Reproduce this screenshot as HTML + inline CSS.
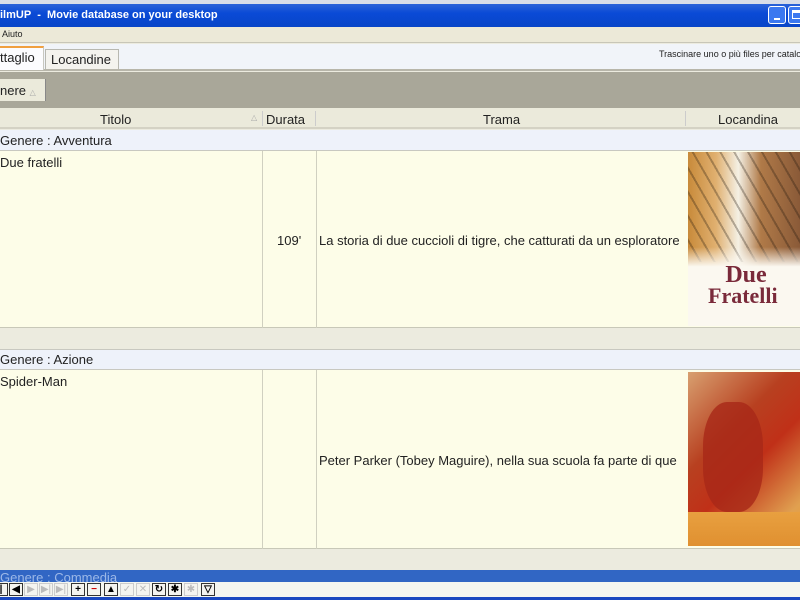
<!DOCTYPE html>
<html><head><style>
*{margin:0;padding:0;box-sizing:border-box}
body{width:800px;height:600px;overflow:hidden;position:relative;font-family:"Liberation Sans",sans-serif;background:#ecebdf;color:#222}
.a{position:absolute}
.t{font-size:13px;white-space:nowrap}
.nb{position:absolute;top:583px;width:14px;height:13px;border:1px solid #333;background:#f4f4f0;font-size:10px;line-height:11px;text-align:center;font-weight:bold;color:#000}
.nb.d{border-color:#ccc;color:#bbb;font-weight:normal}
</style></head><body>
<div class="a" style="left:0;top:0;width:800px;height:4px;background:#d8dde8"></div>
<div class="a" style="left:0;top:4px;width:800px;height:23px;background:linear-gradient(#2a62d8,#0a4ad6 40%,#0845c8);"></div>
<div class="a" style="left:0;top:9px;color:#fff;font-weight:bold;font-size:11px;white-space:nowrap">ilmUP&nbsp; - &nbsp;Movie database on your desktop</div>
<div class="a" style="left:768px;top:6px;width:18px;height:18px;border:1px solid #fff;border-radius:3px;background:#3b78f0"><div class="a" style="left:5px;top:11px;width:6px;height:2px;background:#fff"></div></div>
<div class="a" style="left:788px;top:6px;width:18px;height:18px;border:1px solid #fff;border-radius:3px;background:#3b78f0"><div class="a" style="left:3px;top:3px;width:10px;height:9px;border:1px solid #fff;border-top-width:3px"></div></div>
<div class="a" style="left:0;top:27px;width:800px;height:16px;background:#ece9d8;border-bottom:1px solid #c8c6b8"></div>
<div class="a" style="left:2px;top:29px;font-size:9px">Aiuto</div>
<div class="a" style="left:0;top:44px;width:800px;height:27px;background:#f1f4f9;border-bottom:2px solid #b8b6aa"></div>
<div class="a" style="left:0;top:46px;width:44px;height:24px;background:#fcfcfe;border:1px solid #c8c8c0;border-left:0;border-top:2px solid #f0a040;border-bottom:0"></div>
<div class="a t" style="left:0;top:50px">ttaglio</div>
<div class="a" style="left:45px;top:49px;width:74px;height:20px;background:#f4f3ee;border:1px solid #b8b8b0;border-bottom:0"></div>
<div class="a t" style="left:51px;top:52px">Locandine</div>
<div class="a" style="left:659px;top:49px;font-size:9px;white-space:nowrap">Trascinare uno o più files per catalo</div>
<div class="a" style="left:0;top:72px;width:800px;height:36px;background:#a9a799"></div>
<div class="a" style="left:0;top:79px;width:46px;height:22px;background:#ebeadb;border-right:1px solid #888"></div>
<div class="a t" style="left:0;top:83px">nere <span style="font-size:8px;color:#aaa">△</span></div>
<div class="a" style="left:0;top:108px;width:800px;height:21px;background:#ebeadb;border-bottom:2px solid #d4d2c4"></div>
<div class="a t" style="left:100px;top:112px">Titolo</div>
<div class="a" style="left:251px;top:113px;font-size:8px;color:#aaa">△</div>
<div class="a" style="left:262px;top:111px;width:1px;height:15px;background:#ccc"></div>
<div class="a t" style="left:266px;top:112px">Durata</div>
<div class="a" style="left:315px;top:111px;width:1px;height:15px;background:#ccc"></div>
<div class="a t" style="left:483px;top:112px">Trama</div>
<div class="a" style="left:685px;top:111px;width:1px;height:15px;background:#ccc"></div>
<div class="a t" style="left:718px;top:112px">Locandina</div>

<div class="a" style="left:0;top:130px;width:800px;height:21px;background:#eef2fa;border-bottom:1px solid #c8c8c0"></div>
<div class="a t" style="left:0;top:133px">Genere : Avventura</div>
<div class="a" style="left:0;top:151px;width:800px;height:177px;background:#fdfde8;border-bottom:1px solid #c8c8b8"></div>
<div class="a" style="left:262px;top:151px;width:1px;height:177px;background:#d0d0c0"></div>
<div class="a" style="left:316px;top:151px;width:1px;height:177px;background:#d0d0c0"></div>
<div class="a t" style="left:0;top:155px">Due fratelli</div>
<div class="a t" style="left:277px;top:233px">109'</div>
<div class="a t" style="left:319px;top:233px;width:366px;overflow:hidden">La storia di due cuccioli di tigre, che catturati da un esploratore</div>
<div class="a" style="left:688px;top:152px;width:112px;height:174px;background:linear-gradient(90deg,#c88a3a,#e0b070 25%,#f4f0e4 45%,#b07a48 65%,#8a5a38);overflow:hidden">
<div class="a" style="left:0;top:0;width:112px;height:110px;background:repeating-linear-gradient(60deg,transparent 0 10px,rgba(30,20,10,.3) 10px 12px)"></div>
<div class="a" style="left:0;top:95px;width:112px;height:79px;background:linear-gradient(rgba(240,232,216,0),#fbf8f0 25%)"></div>
<div class="a" style="left:28px;top:112px;font-family:'Liberation Serif',serif;font-weight:bold;font-size:24px;line-height:22px;color:#7a2a3a;text-align:center;width:60px">Due</div>
<div class="a" style="left:20px;top:131px;font-family:'Liberation Serif',serif;font-weight:bold;font-size:22px;color:#7a2a3a">Fratelli</div>
</div>

<div class="a" style="left:0;top:349px;width:800px;height:21px;background:#eef2fa;border-top:1px solid #c8c8c0;border-bottom:1px solid #c8c8c0"></div>
<div class="a t" style="left:0;top:352px">Genere : Azione</div>
<div class="a" style="left:0;top:370px;width:800px;height:179px;background:#fdfde8;border-bottom:1px solid #c8c8b8"></div>
<div class="a" style="left:262px;top:370px;width:1px;height:179px;background:#d0d0c0"></div>
<div class="a" style="left:316px;top:370px;width:1px;height:179px;background:#d0d0c0"></div>
<div class="a t" style="left:0;top:374px">Spider-Man</div>
<div class="a t" style="left:319px;top:453px;width:366px;overflow:hidden">Peter Parker (Tobey Maguire), nella sua scuola fa parte di que</div>
<div class="a" style="left:688px;top:372px;width:112px;height:174px;background:linear-gradient(135deg,#d8a070,#b84020 35%,#c03018 55%,#e0a050 85%,#f0a030);overflow:hidden">
<div class="a" style="left:15px;top:30px;width:60px;height:110px;border-radius:40%;background:#a82818;opacity:.8"></div>
<div class="a" style="left:0;top:140px;width:112px;height:34px;background:linear-gradient(#e8a040,#e09030)"></div>
</div>

<div class="a" style="left:0;top:570px;width:800px;height:13px;background:#3166c4"></div>
<div class="a" style="left:0;top:571px;font-size:13px;color:#9cb8e8;line-height:13px;height:12px;overflow:hidden;white-space:nowrap">Genere : Commedia</div>
<div class="a" style="left:0;top:582px;width:800px;height:15px;background:#f4f6f0"></div>
<div class="a" style="left:0;top:597px;width:800px;height:3px;background:#1a48c0"></div>
<div class="nb" style="left:-6px">|</div>
<div class="nb" style="left:9px">◀</div>
<div class="nb d" style="left:24px">▶</div>
<div class="nb d" style="left:39px">▶|</div>
<div class="nb d" style="left:54px">▶|</div>
<div class="nb" style="left:71px">+</div>
<div class="nb" style="left:87px;color:#c00">−</div>
<div class="nb" style="left:104px">▲</div>
<div class="nb d" style="left:120px">✓</div>
<div class="nb d" style="left:136px">✕</div>
<div class="nb" style="left:152px">↻</div>
<div class="nb" style="left:168px">✱</div>
<div class="nb d" style="left:184px">✱</div>
<div class="nb" style="left:201px">▽</div>
</body></html>
